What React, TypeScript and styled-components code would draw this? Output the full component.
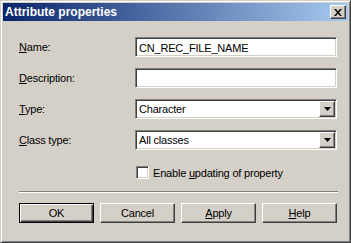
import styled, { createGlobalStyle } from "styled-components";

const GlobalStyle = createGlobalStyle`
  html, body {
    margin: 0;
    padding: 0;
    background: #d4d0c8;
  }
  * {
    box-sizing: border-box;
  }
`;

const Dialog = styled.div`
  width: 351px;
  height: 243px;
  display: flex;
  flex-direction: column;
  padding: 2px;
  background: #d4d0c8;
  border: 1px solid;
  border-color: #d4d0c8 #404040 #404040 #d4d0c8;
  box-shadow: inset 1px 1px #ffffff, inset -1px -1px #808080;
  font-family: "Liberation Sans", Arial, sans-serif;
  font-size: 11px;
  letter-spacing: -0.2px;
  color: #000;
`;

const TitleBar = styled.div`
  height: 18px;
  display: flex;
  align-items: center;
  justify-content: space-between;
  padding: 0 2px 0 2px;
  background: linear-gradient(to right, #0a246a, #a6caf0);
`;

const Title = styled.span`
  color: #fff;
  font-weight: bold;
  font-size: 12px;
  letter-spacing: 0;
`;

const Raised = styled.div`
  background: #d4d0c8;
  border: 1px solid;
  border-color: #ffffff #404040 #404040 #ffffff;
  box-shadow: inset -1px -1px #808080, inset 1px 1px #d4d0c8;
`;

const CloseButton = styled(Raised)`
  width: 16px;
  height: 14px;
  display: flex;
  align-items: center;
  justify-content: center;
`;

const Content = styled.div`
  padding: 16px 0 0 16px;
  display: flex;
  flex-direction: column;
`;

const FormGrid = styled.div`
  display: grid;
  grid-template-columns: 116px 202px;
  grid-auto-rows: 20px;
  row-gap: 11px;
  align-items: center;
`;

const Label = styled.label`
  white-space: nowrap;
`;

const U = styled.span`
  text-decoration: underline;
`;

const Sunken = styled.div`
  height: 20px;
  background: #fff;
  border: 1px solid;
  border-color: #808080 #ffffff #ffffff #808080;
  box-shadow: inset 1px 1px #404040, inset -1px -1px #d4d0c8;
  padding: 2px 2px 0 3px;
  display: flex;
  align-items: center;
  justify-content: space-between;
`;

const FieldText = styled.span`
  line-height: 14px;
  padding-bottom: 1px;
`;

const Select = styled(Sunken)`
  padding-right: 1px;
  padding-top: 1px;
  padding-bottom: 1px;
`;

const ArrowButton = styled(Raised)`
  width: 16px;
  height: 16px;
  display: flex;
  align-items: center;
  justify-content: center;
`;

const CheckRow = styled.div`
  margin: 16px 0 0 117px;
  display: flex;
  align-items: center;
  gap: 4px;
  height: 13px;
`;

const CheckBox = styled.div`
  width: 13px;
  height: 13px;
  background: #fff;
  border: 1px solid;
  border-color: #808080 #ffffff #ffffff #808080;
  box-shadow: inset 1px 1px #404040, inset -1px -1px #d4d0c8;
`;

const Separator = styled.div`
  margin-top: 12px;
  width: 319px;
  height: 2px;
  border-top: 1px solid #808080;
  border-bottom: 1px solid #ffffff;
`;

const ButtonRow = styled.div`
  margin-top: 10px;
  display: flex;
  gap: 6px;
`;

const Button = styled.button<{ $default?: boolean }>`
  width: 75px;
  height: 20px;
  padding: 0;
  font-family: "Liberation Sans", Arial, sans-serif;
  font-size: 11px;
  letter-spacing: -0.2px;
  color: #000;
  background: #d4d0c8;
  border: 1px solid;
  border-color: ${(p) =>
    p.$default ? "#000 #000 #000 #000" : "#ffffff #404040 #404040 #ffffff"};
  box-shadow: ${(p) =>
    p.$default
      ? "inset 1px 1px #ffffff, inset -1px -1px #404040, inset -2px -2px #808080"
      : "inset -1px -1px #808080"};
`;

const Arrow = () => (
  <svg width="7" height="4" viewBox="0 0 7 4">
    <path d="M0 0h7L3.5 4z" fill="#000" />
  </svg>
);

const CloseGlyph = () => (
  <svg width="8" height="7" viewBox="0 0 8 7">
    <path
      d="M0 0h2l2 2.5L6 0h2L5 3.5 8 7H6L4 4.5 2 7H0l3-3.5z"
      fill="#000"
    />
  </svg>
);

export default function App() {
  return (
    <>
      <GlobalStyle />
      <Dialog>
        <TitleBar>
          <Title>Attribute properties</Title>
          <CloseButton>
            <CloseGlyph />
          </CloseButton>
        </TitleBar>
        <Content>
          <FormGrid>
            <Label>
              <U>N</U>ame:
            </Label>
            <Sunken>
              <FieldText>CN_REC_FILE_NAME</FieldText>
            </Sunken>
            <Label>
              <U>D</U>escription:
            </Label>
            <Sunken />
            <Label>
              <U>T</U>ype:
            </Label>
            <Select>
              <FieldText>Character</FieldText>
              <ArrowButton>
                <Arrow />
              </ArrowButton>
            </Select>
            <Label>
              <U>C</U>lass type:
            </Label>
            <Select>
              <FieldText>All classes</FieldText>
              <ArrowButton>
                <Arrow />
              </ArrowButton>
            </Select>
          </FormGrid>
          <CheckRow>
            <CheckBox />
            <span>
              Enable <U>u</U>pdating of property
            </span>
          </CheckRow>
          <Separator />
          <ButtonRow>
            <Button $default>OK</Button>
            <Button>Cancel</Button>
            <Button>
              <U>A</U>pply
            </Button>
            <Button>
              <U>H</U>elp
            </Button>
          </ButtonRow>
        </Content>
      </Dialog>
    </>
  );
}
